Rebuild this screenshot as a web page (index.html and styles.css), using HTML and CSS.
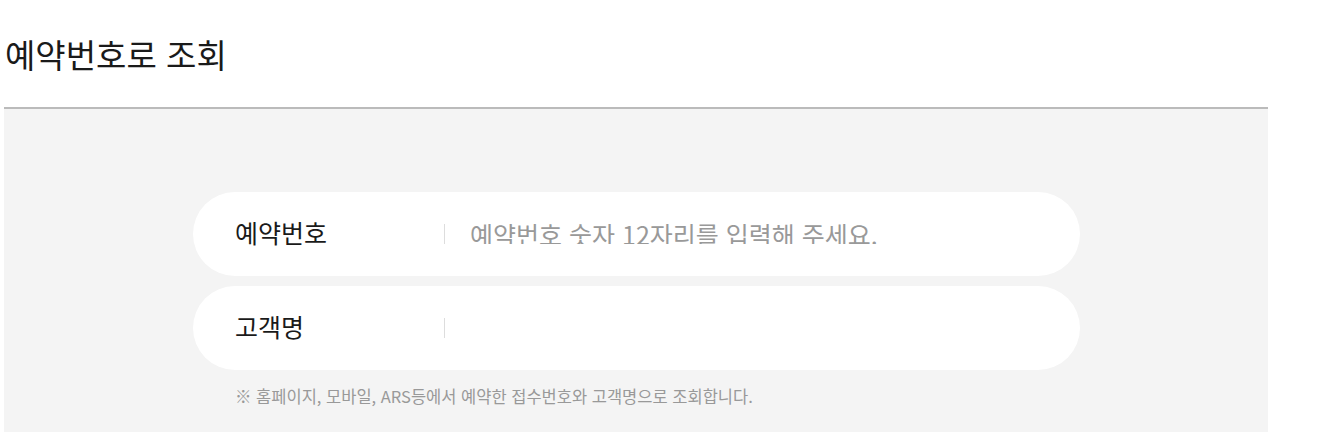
FILE: index.html
```html
<!DOCTYPE html>
<html lang="ko">
<head>
  <meta charset="UTF-8">
  <title>예약번호로 조회</title>
  <link rel="stylesheet" href="styles.css">
</head>
<body>
  <div class="wrap">
    <h2 class="title">예약번호로 조회</h2>

    <div class="searchBox">
      <form class="searchForm" onsubmit="return false;">
        <div class="field">
          <label for="resvNo">예약번호</label>
          <input type="text" id="resvNo" name="resvNo" placeholder="예약번호 숫자 12자리를 입력해 주세요.">
        </div>
        <div class="field">
          <label for="custName">고객명</label>
          <input type="text" id="custName" name="custName">
        </div>
        <p class="notice">※ 홈페이지, 모바일, ARS등에서 예약한 접수번호와 고객명으로 조회합니다.</p>
      </form>
    </div>
  </div>
</body>
</html>
```

FILE: styles.css
```css
body {
  margin: 0;
  padding: 0;
  background-color: #ffffff;
  font-family: "Noto Sans CJK KR", "Noto Sans", sans-serif;
  color: #222222;
}
.wrap {
  width: 1264px;
  margin-left: 4px;
}
/* 제목 + 하단 회색 라인 */
.title {
  margin: 0;
  padding: 36px 0 34px 1px;
  height: 37px;
  font-size: 33px;
  font-weight: 400;
  line-height: 37px;
  color: #1a1a1a;
  border-bottom: 2px solid #bbbbbb;
}
.searchBox {
  background-color: #f4f4f4;
  padding: 83px 0 40px;
}
.searchForm {
  width: 887px;
  margin: 0 0 0 189px;
  display: flex;
  flex-direction: column;
  gap: 10px;
}
.field {
  display: flex;
  align-items: center;
  height: 84px;
  background-color: #ffffff;
  border-radius: 42px;
  padding: 0 42px;
}
label {
  width: 209px;
  margin-bottom: 4px;
  font-size: 25px;
  font-weight: 400;
  color: #1a1a1a;
}
input[type="text"] {
  flex: 1;
  border: none;
  border-left: 1px solid #dddddd;
  outline: none;
  height: 20px;
  padding: 0 0 0 25px;
  font-family: inherit;
  font-size: 25px;
  color: #222222;
  background: transparent;
}
input::placeholder {
  color: #999999;
}
.notice {
  margin: 4px 0 0 42px;
  font-size: 16.5px;
  color: #999999;
}
```
